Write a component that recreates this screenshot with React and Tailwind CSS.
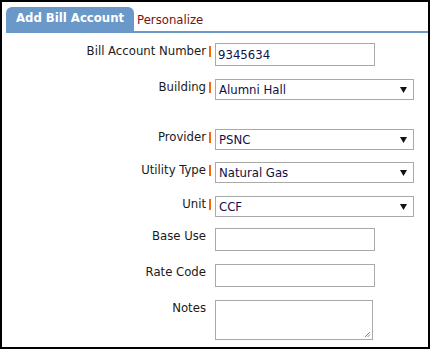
import React from "react";

function Req() {
  return <span className="block w-[2px] h-[11px] mt-[3px] ml-[2px] bg-[#f26a0c]" />;
}

function Arrow() {
  return (
    <svg width="7" height="6" viewBox="0 0 7 6" className="absolute right-[6px] top-[7px]">
      <path d="M0 0 H7 L3.5 6 Z" fill="#111" />
    </svg>
  );
}

function Row({ label, required, mt, children }) {
  return (
    <div className={`flex items-start ${mt}`}>
      <div className="w-[205px] text-right pr-[1px] leading-[16px] text-[#1a1a1a]">{label}</div>
      <div className="w-[8px] shrink-0">{required && <Req />}</div>
      {children}
    </div>
  );
}

function TextBox({ value }) {
  return (
    <div className="w-[160px] h-[23px] border border-[#a9a9a9] bg-white px-[2px] leading-[21px] text-[#10104a]">
      {value}
    </div>
  );
}

function SelectBox({ value }) {
  return (
    <div className="relative w-[199px] h-[21px] border border-[#a9a9a9] bg-white px-[3px] leading-[19px] text-[#10104a]">
      {value}
      <Arrow />
    </div>
  );
}

export default function App() {
  return (
    <div
      className="w-[430px] h-[349px] border-2 border-black bg-white overflow-hidden text-[13px]"
      style={{ fontFamily: '"DejaVu Sans Condensed", "DejaVu Sans", sans-serif' }}
    >
      <div className="pt-[5px] pl-[4px]">
        <div className="flex items-end">
          <div className="h-[24px] px-[10px] rounded-t-[6px] bg-[#6a99c9] text-white font-bold leading-[22px]">
            Add Bill Account
          </div>
          <div className="ml-[3px] leading-[22px] text-[#7a1010]">Personalize</div>
        </div>
        <div className="h-[2px] bg-[#6a99c9]" />
      </div>

      <div>
        <Row label="Bill Account Number" required mt="mt-[10px]">
          <TextBox value="9345634" />
        </Row>
        <Row label="Building" required mt="mt-[13px]">
          <SelectBox value="Alumni Hall" />
        </Row>
        <Row label="Provider" required mt="mt-[29px]">
          <SelectBox value="PSNC" />
        </Row>
        <Row label="Utility Type" required mt="mt-[12px]">
          <SelectBox value="Natural Gas" />
        </Row>
        <Row label="Unit" required mt="mt-[13px]">
          <SelectBox value="CCF" />
        </Row>
        <Row label="Base Use" mt="mt-[11px]">
          <TextBox value="" />
        </Row>
        <Row label="Rate Code" mt="mt-[13px]">
          <TextBox value="" />
        </Row>
        <Row label="Notes" mt="mt-[13px]">
          <div className="relative w-[158px] h-[40px] border border-[#a9a9a9] bg-white">
            <svg width="7" height="7" viewBox="0 0 7 7" className="absolute right-[1px] bottom-[1px]">
              <path d="M6 1 L1 6 M6 3.5 L3.5 6" stroke="#888" strokeWidth="1" />
            </svg>
          </div>
        </Row>
      </div>
    </div>
  );
}
